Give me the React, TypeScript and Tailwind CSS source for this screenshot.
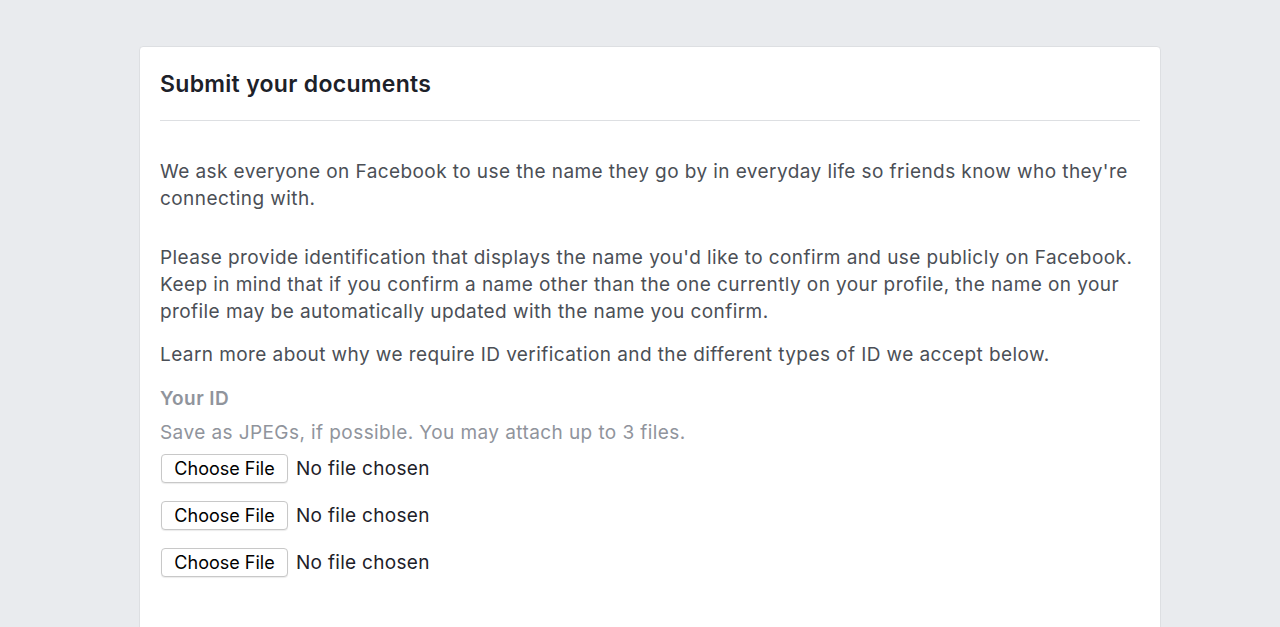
export default function App() {
  const rows = [0, 1, 2];
  return (
    <div
      className="h-screen overflow-hidden bg-[#e9ebee] pt-[46px]"
      style={{ fontFamily: "Inter, 'Liberation Sans', sans-serif" }}
    >
      <div className="ml-[139px] w-[1022px] h-[600px] rounded-[4px] border border-[#dddfe2] bg-white px-5">
        {/* Header */}
        <div className="border-b border-[#dddfe2] pt-[23px] pb-[22px]">
          <h1 className="text-[23px] leading-[28px] font-semibold tracking-[0.3px] text-[#1d2129]">
            Submit your documents
          </h1>
        </div>

        {/* Body */}
        <div className="pt-[37px] text-[19px] leading-[27px] tracking-[0.42px] text-[#4b4f56]">
          <p>
            We ask everyone on Facebook to use the name they go by in everyday
            life so friends know who they're connecting with.
          </p>
          <p className="mt-[32px]">
            Please provide identification that displays the name you'd like to
            confirm and use publicly on Facebook. Keep in mind that if you
            confirm a name other than the one currently on your profile, the
            name on your profile may be automatically updated with the name you
            confirm.
          </p>
          <p className="mt-[16px]">
            Learn more about why we require ID verification and the different
            types of ID we accept below.
          </p>

          <div className="mt-[17px] font-semibold text-[#90949c]">Your ID</div>
          <div className="mt-[7px] text-[#90949c]">
            Save as JPEGs, if possible. You may attach up to 3 files.
          </div>

          <div className="mt-[8px] flex flex-col gap-[18px]">
            {rows.map((r) => (
              <div key={r} className="flex items-center gap-[8px]">
                <button
                  type="button"
                  className="ml-px h-[29px] w-[127px] rounded-[4px] border border-[#c8c8c8] bg-white text-[18px] leading-none tracking-normal text-black shadow-[0_1px_1px_rgba(0,0,0,0.08)]"
                >
                  Choose File
                </button>
                <span className="text-[19px] tracking-[0.3px] text-[#1d2129]">
                  No file chosen
                </span>
              </div>
            ))}
          </div>
        </div>
      </div>
    </div>
  );
}
